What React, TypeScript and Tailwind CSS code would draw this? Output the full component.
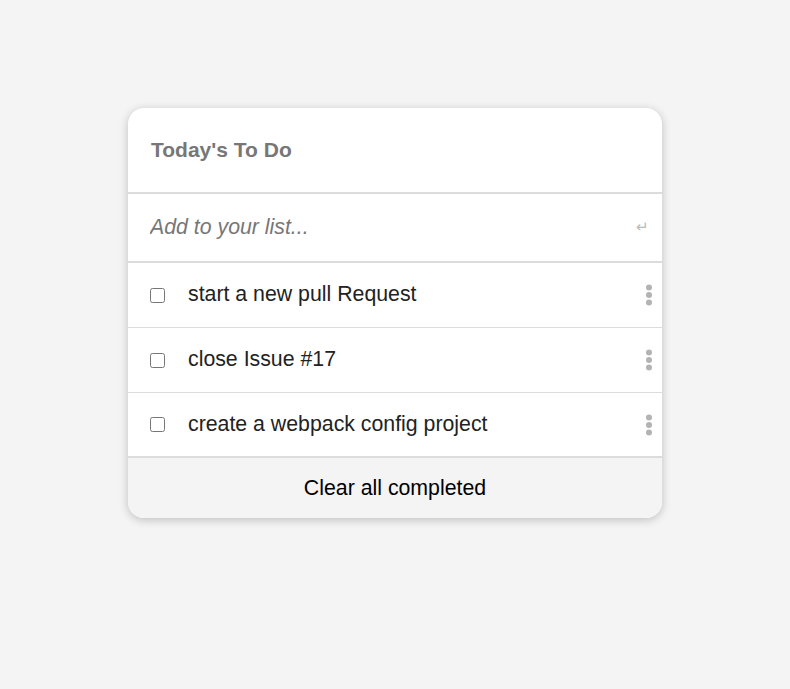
const TODOS = ['start a new pull Request', 'close Issue #17', 'create a webpack config project']

function KebabIcon() {
  return (
    <svg width="8" height="22" viewBox="0 0 8 22" fill="#b3b3b3">
      <circle cx="4" cy="3.5" r="3" />
      <circle cx="4" cy="11" r="3" />
      <circle cx="4" cy="18.5" r="3" />
    </svg>
  )
}

export default function App() {
  return (
    <div className="min-h-[689px] bg-[#f4f4f4] pt-[108px] font-['Liberation_Sans',Arial,sans-serif]">
      <div className="ml-[128px] w-[534px] overflow-hidden rounded-2xl bg-white shadow-[0_2px_10px_rgba(0,0,0,0.22)]">
        <div className="flex h-[86px] items-center border-b-2 border-[#dcdcdc] px-[23px]">
          <h1 className="text-[21px] font-bold text-[#777]">Today's To Do</h1>
        </div>
        <div className="flex h-[69px] items-center border-b-2 border-[#dcdcdc] pl-[22px] pr-[13px]">
          <input
            className="flex-1 bg-transparent text-[21.3px] italic text-[#333] outline-none placeholder:text-[#777]"
            placeholder="Add to your list..."
          />
          <span className="text-[15px] text-[#bbb]">↵</span>
        </div>
        <ul>
          {TODOS.map((todo, i) => (
            <li
              key={todo}
              className={`flex h-[65px] items-center pl-[22px] pr-[9px] ${i < TODOS.length - 1 ? 'border-b border-[#dcdcdc]' : 'border-b-2 border-[#dcdcdc]'}`}
            >
              <input type="checkbox" className="m-0 h-[15px] w-[15px]" />
              <span className="ml-[23px] flex-1 text-[21.3px] text-[#222]">{todo}</span>
              <KebabIcon />
            </li>
          ))}
        </ul>
        <button className="flex h-[60px] w-full items-center justify-center bg-[#f4f4f4] pt-[2px] text-[21.3px] text-black">
          Clear all completed
        </button>
      </div>
    </div>
  )
}
